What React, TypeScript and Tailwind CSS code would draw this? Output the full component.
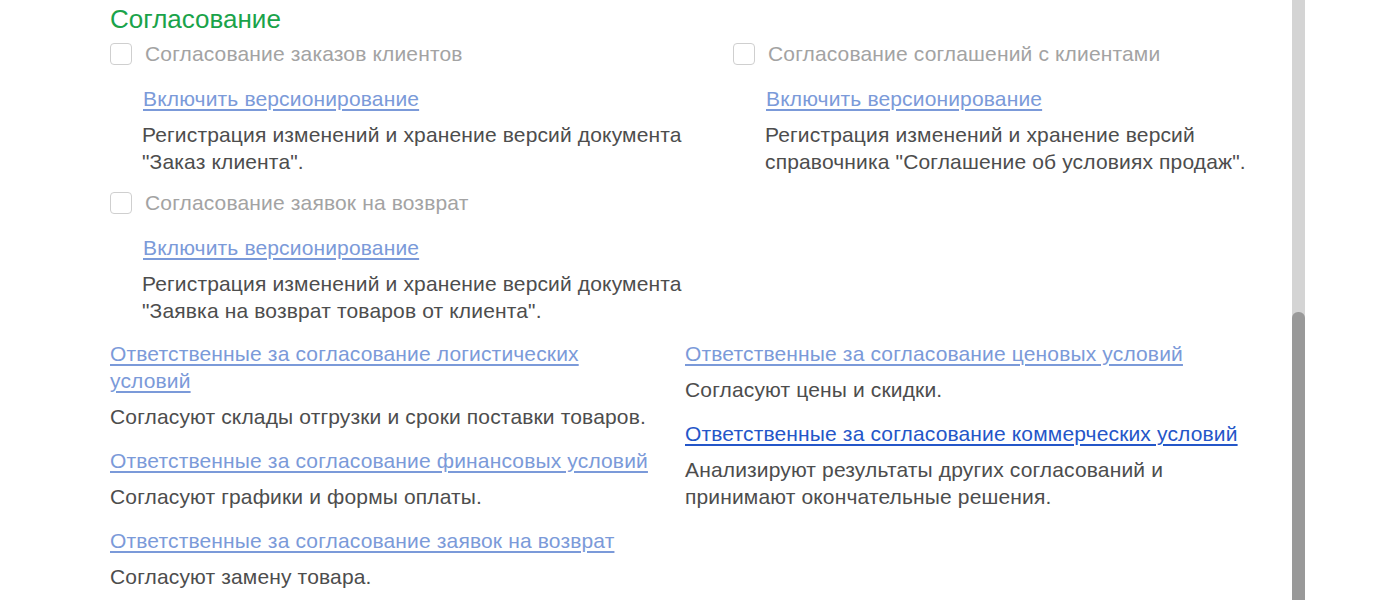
import React from "react";

type Block = { link: string[]; desc: string[]; active?: boolean };

function Check({ label }: { label: string }) {
  return (
    <div className="flex h-[27px] items-center">
      <span className="box-border h-[22px] w-[22px] shrink-0 rounded-[4px] border border-[#cfcfcf] bg-white" />
      <span className="ml-[13px] text-[#a3a3a3]">{label}</span>
    </div>
  );
}

function Versioned({ label, desc }: { label: string; desc: string[] }) {
  return (
    <div>
      <Check label={label} />
      <div className="mt-[18px] pl-[33px]">
        <a className="text-[#7b9ad9] underline underline-offset-[3px]">Включить версионирование</a>
      </div>
      <div className="mt-[9px] pl-[32px] text-[#4d4d4d]">
        {desc.map((d) => (
          <div key={d}>{d}</div>
        ))}
      </div>
    </div>
  );
}

function Responsible({ items }: { items: Block[] }) {
  return (
    <div className="flex flex-col gap-[17px]">
      {items.map((it) => (
        <div key={it.link.join(" ")}>
          {it.link.map((l) => (
            <div key={l}>
              <a
                className={
                  it.active
                    ? "text-[#2456c8] underline underline-offset-[3px]"
                    : "text-[#7b9ad9] underline underline-offset-[3px]"
                }
              >
                {l}
              </a>
            </div>
          ))}
          <div className="mt-[9px] text-[#4d4d4d]">
            {it.desc.map((d) => (
              <div key={d}>{d}</div>
            ))}
          </div>
        </div>
      ))}
    </div>
  );
}

export default function App() {
  const left: Block[] = [
    {
      link: ["Ответственные за согласование логистических", "условий"],
      desc: ["Согласуют склады отгрузки и сроки поставки товаров."],
    },
    {
      link: ["Ответственные за согласование финансовых условий"],
      desc: ["Согласуют графики и формы оплаты."],
    },
    {
      link: ["Ответственные за согласование заявок на возврат"],
      desc: ["Согласуют замену товара."],
    },
  ];
  const right: Block[] = [
    {
      link: ["Ответственные за согласование ценовых условий"],
      desc: ["Согласуют цены и скидки."],
    },
    {
      link: ["Ответственные за согласование коммерческих условий"],
      desc: ["Анализируют результаты других согласований и", "принимают окончательные решения."],
      active: true,
    },
  ];

  return (
    <div className="flex h-[600px] w-[1380px] overflow-hidden bg-white font-['Liberation_Sans',Arial,sans-serif] text-[21px] leading-[27px] tracking-[0.15px]">
      <div className="w-[1292px] pl-[110px]">
        <h2 className="pt-[6px] text-[26px] leading-[27px] tracking-normal text-[#1aa34a]">Согласование</h2>

        <div className="mt-[7px] flex">
          <div className="flex w-[623px] flex-col gap-[14px]">
            <Versioned
              label="Согласование заказов клиентов"
              desc={["Регистрация изменений и хранение версий документа", "\"Заказ клиента\"."]}
            />
            <Versioned
              label="Согласование заявок на возврат"
              desc={[
                "Регистрация изменений и хранение версий документа",
                "\"Заявка на возврат товаров от клиента\".",
              ]}
            />
          </div>
          <div className="w-[545px]">
            <Versioned
              label="Согласование соглашений с клиентами"
              desc={[
                "Регистрация изменений и хранение версий",
                "справочника \"Соглашение об условиях продаж\".",
              ]}
            />
          </div>
        </div>

        <div className="mt-[16px] flex">
          <div className="w-[575px]">
            <Responsible items={left} />
          </div>
          <div className="w-[590px]">
            <Responsible items={right} />
          </div>
        </div>
      </div>

      <div className="relative h-full w-[13px] bg-[#d4d4d4]">
        <div className="absolute bottom-0 left-0 top-[312px] w-full rounded-t-[6px] bg-[#999999]" />
      </div>
    </div>
  );
}
